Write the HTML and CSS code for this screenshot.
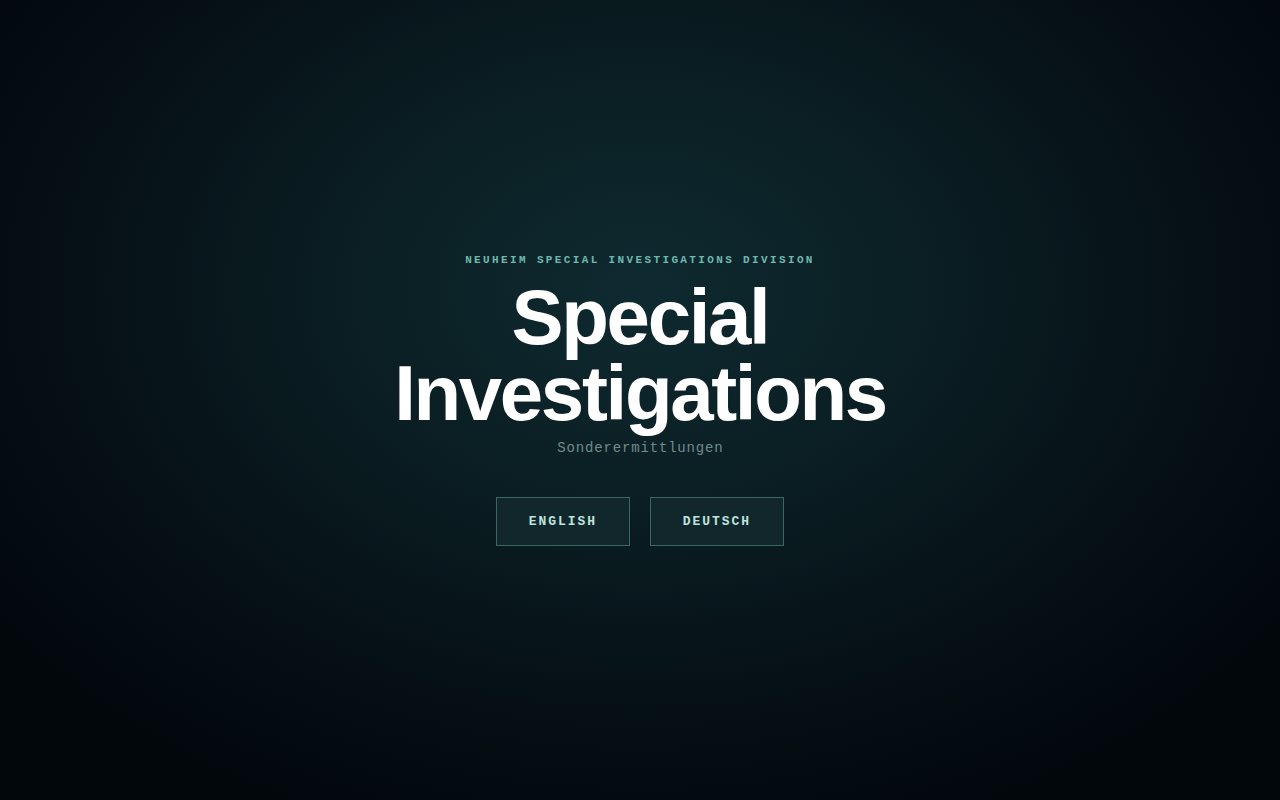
FILE: index.html
```html
<!DOCTYPE html>
<html lang="de">
<head>
<meta charset="utf-8">
<title>Special Investigations</title>
<link rel="stylesheet" href="styles.css">
</head>
<body>
<main class="hero">
  <p class="eyebrow">Neuheim Special Investigations Division</p>
  <h1 class="title">Special<br>Investigations</h1>
  <p class="subtitle">Sonderermittlungen</p>
  <div class="langs">
    <a class="lang-btn" href="#en">English</a>
    <a class="lang-btn" href="#de">Deutsch</a>
  </div>
</main>
</body>
</html>
```

FILE: styles.css
```css
html, body {
  margin: 0;
  padding: 0;
  height: 100%;
}
body {
  background: radial-gradient(ellipse 62% 72% at 50% 36%, #0e2a30 0%, #0a1d22 40%, #050f15 75%, #02070c 100%);
  background-color: #02070c;
  font-family: "Liberation Sans", Arial, sans-serif;
  color: #fff;
}
.hero {
  height: 100vh;
  display: flex;
  flex-direction: column;
  align-items: center;
  justify-content: center;
  text-align: center;
}
.eyebrow {
  margin: 0 0 12px;
  font-family: "Liberation Mono", "Courier New", monospace;
  font-weight: 700;
  font-size: 11px;
  line-height: 1.2;
  letter-spacing: 0.215em;
  text-transform: uppercase;
  color: #6fb8b0;
}
.title {
  margin: 0;
  font-family: "Liberation Sans", Arial, sans-serif;
  font-weight: 700;
  font-size: 78px;
  line-height: 76px;
  letter-spacing: -0.03em;
  color: #ffffff;
}
.subtitle {
  margin: 9px 0 41px;
  font-family: "Liberation Mono", "Courier New", monospace;
  font-size: 14px;
  line-height: 1.2;
  letter-spacing: 0.06em;
  color: #6e8c8c;
  padding-left: 0.06em;
}
.langs {
  display: flex;
  gap: 20px;
}
.lang-btn {
  display: block;
  box-sizing: border-box;
  width: 134px;
  padding: 16px 0;
  border: 1px solid #3d6561;
  background: #12272b;
  font-family: "Liberation Mono", "Courier New", monospace;
  font-weight: 700;
  font-size: 13px;
  line-height: 15px;
  letter-spacing: 0.15em;
  text-transform: uppercase;
  text-decoration: none;
  color: #bde4de;
}
```
